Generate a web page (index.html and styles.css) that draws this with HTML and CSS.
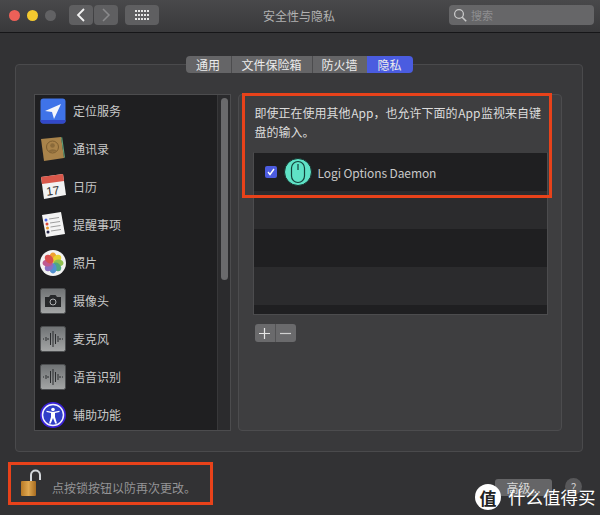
FILE: index.html
```html
<!DOCTYPE html>
<html lang="zh-CN">
<head>
    <meta charset="UTF-8">
    <title>安全性与隐私</title>
    <link rel="stylesheet" href="styles.css">
</head>
<body>
    <div class="window">
        <header class="titlebar">
            <div class="lights">
                <span class="dot dot-close"></span>
                <span class="dot dot-min"></span>
                <span class="dot dot-off"></span>
            </div>
            <div class="nav">
                <button class="tool-btn nav-btn">
                    <svg width="10" height="14" viewBox="0 0 10 14"><path d="M8 1 2 7l6 6" fill="none" stroke="#f2f2f2" stroke-width="1.8"/></svg>
                </button>
                <button class="tool-btn nav-btn">
                    <svg width="10" height="14" viewBox="0 0 10 14"><path d="m2 1 6 6-6 6" fill="none" stroke="#8a8a8c" stroke-width="1.5"/></svg>
                </button>
            </div>
            <button class="tool-btn grid-btn">
                <svg width="14" height="10" viewBox="0 0 14 10" fill="#e6e6e6">
                    <rect x="0" y="0" width="2" height="2"/><rect x="3" y="0" width="2" height="2"/><rect x="6" y="0" width="2" height="2"/><rect x="9" y="0" width="2" height="2"/><rect x="12" y="0" width="2" height="2"/>
                    <rect x="0" y="4" width="2" height="2"/><rect x="3" y="4" width="2" height="2"/><rect x="6" y="4" width="2" height="2"/><rect x="9" y="4" width="2" height="2"/><rect x="12" y="4" width="2" height="2"/>
                    <rect x="0" y="8" width="2" height="2"/><rect x="3" y="8" width="2" height="2"/><rect x="6" y="8" width="2" height="2"/><rect x="9" y="8" width="2" height="2"/><rect x="12" y="8" width="2" height="2"/>
                </svg>
            </button>
            <h1 class="title">安全性与隐私</h1>
            <div class="search">
                <svg width="14" height="14" viewBox="0 0 14 14"><circle cx="6" cy="6" r="4.4" fill="none" stroke="#c8c8c8" stroke-width="1.3"/><path d="m9.2 9.2 4 4" stroke="#c8c8c8" stroke-width="1.6"/></svg>
                <span>搜索</span>
            </div>
        </header>

        <main class="group">
            <nav class="tabs">
                <span class="tab tab-general">通用</span>
                <span class="tab tab-vault">文件保险箱</span>
                <span class="tab tab-firewall">防火墙</span>
                <span class="tab active">隐私</span>
            </nav>
            <div class="panels">
                <div class="list-box">
                    <ul class="services">
                        <li>
                            <svg class="icon" viewBox="0 0 26 26"><rect x="0.5" y="0.5" width="25" height="25" rx="3" fill="#3f73e8"/><path d="M0.5 22v1a2.500 2.500 0 0 0 2.500 2.500h20a2.500 2.500 0 0 0 2.500-2.500v-1z" fill="#3248c8"/><path d="M21 6 5 13l7 1 2 7z" fill="#f4f6fb"/></svg>
                            定位服务
                        </li>
                        <li>
                            <svg class="icon" viewBox="0 0 26 26"><path d="M1 3 21 1l3 21-20 3z" fill="#a9834a"/><path d="m21 1.500 1.200-.2 2.800 20-1 .7z" fill="#5f9e78"/><circle cx="12.500" cy="11" r="6" fill="none" stroke="#7c5d30"/><circle cx="12.500" cy="9.500" r="2.300" fill="#8a6a3a"/><path d="M8 16c1.500-3.500 7.500-3.500 9-.5z" fill="#8a6a3a"/></svg>
                            通讯录
                        </li>
                        <li>
                            <svg class="icon" viewBox="0 0 26 26"><path d="M1 3 23 0l3 21-22 4z" fill="#f2f2f2"/><path d="M1 3 23 0l1 7L2 10z" fill="#d9574a"/><text x="13" y="21" class="cal-day" transform="rotate(-7 13 18)">17</text></svg>
                            日历
                        </li>
                        <li>
                            <svg class="icon" viewBox="0 0 26 26"><path d="M2 3 21 0l4 22-19 3z" fill="#f4f4f4"/><circle cx="6" cy="8" r="1.500" fill="#4a64e0"/><circle cx="7" cy="12" r="1.500" fill="#d9483a"/><circle cx="7.500" cy="16" r="1.500" fill="#e8972a"/><circle cx="8" cy="20" r="1.500" fill="#26264a"/><path d="m9 7 10-1.500M10 11l10-1.500M10.500 15l10-1.500M11 19l10-1.500" stroke="#888" stroke-width=".8"/></svg>
                            提醒事项
                        </li>
                        <li>
                            <svg class="icon" viewBox="0 0 26 26">
                                <circle cx="13" cy="13" r="13" fill="#f2f2f2"/>
                                <ellipse cx="13" cy="7.500" rx="3.600" ry="5" fill="#f0a030"/>
                                <ellipse cx="13" cy="7.500" rx="3.600" ry="5" fill="#e8d030" transform="rotate(45 13 13)"/>
                                <ellipse cx="13" cy="7.500" rx="3.600" ry="5" fill="#90c050" transform="rotate(90 13 13)"/>
                                <ellipse cx="13" cy="7.500" rx="3.600" ry="5" fill="#50a880" transform="rotate(135 13 13)"/>
                                <ellipse cx="13" cy="7.500" rx="3.600" ry="5" fill="#5090d0" transform="rotate(180 13 13)"/>
                                <ellipse cx="13" cy="7.500" rx="3.600" ry="5" fill="#8a70c0" transform="rotate(225 13 13)"/>
                                <ellipse cx="13" cy="7.500" rx="3.600" ry="5" fill="#c05a90" transform="rotate(270 13 13)"/>
                                <ellipse cx="13" cy="7.500" rx="3.600" ry="5" fill="#d85050" transform="rotate(315 13 13)"/>
                            </svg>
                            照片
                        </li>
                        <li>
                            <svg class="icon" viewBox="0 0 26 26"><defs><linearGradient id="metal" x1="0" y1="0" x2="0" y2="1"><stop offset="0" stop-color="#6f7274"/><stop offset="1" stop-color="#a4a6a6"/></linearGradient></defs><rect x="0.500" y="0.500" width="25" height="25" rx="2" fill="url(#metal)" stroke="#4c4e50"/><path d="M5 9h4l1.500-2h5L17 9h4v10H5z" fill="#26282a"/><circle cx="13" cy="14" r="3" fill="none" stroke="#b0b2b4"/></svg>
                            摄像头
                        </li>
                        <li>
                            <svg class="icon" viewBox="0 0 26 26"><rect x="0.500" y="0.500" width="25" height="25" rx="2" fill="url(#metal)" stroke="#4c4e50"/><path d="M3 13h1M6 11v4M8 12v2M10.500 7v12M13 5v16M15.500 8v10M18 10v6M20 12v2M22 13h1" stroke="#2a2c2e" stroke-width="1"/></svg>
                            麦克风
                        </li>
                        <li>
                            <svg class="icon" viewBox="0 0 26 26"><rect x="0.500" y="0.500" width="25" height="25" rx="2" fill="url(#metal)" stroke="#4c4e50"/><path d="M3 13h1M6 11v4M8 12v2M10.500 7v12M13 5v16M15.500 8v10M18 10v6M20 12v2M22 13h1" stroke="#2a2c2e" stroke-width="1"/></svg>
                            语音识别
                        </li>
                        <li>
                            <svg class="icon" viewBox="0 0 26 26"><circle cx="13" cy="13" r="13" fill="#3a22d8"/><circle cx="13" cy="13" r="10.500" fill="#2f3ec8" stroke="#f2f2ff" stroke-width="1.500"/><circle cx="13" cy="7.500" r="1.800" fill="#fff"/><path d="M6.500 10 11 11v4l-2 6.500h1.800L13 16l2.200 5.500H17L15 15v-4l4.500-1v-1.200L13 10 6.500 8.800z" fill="#fff"/></svg>
                            辅助功能
                        </li>
                    </ul>
                    <div class="scrollbar"><span class="thumb"></span></div>
                </div>

                <section class="detail">
                    <p class="hint">即使正在使用其他 App，也允许下面的 App 监视来自键盘的输入。</p>
                    <div class="app-table">
                        <div class="app-row row-dark">
                            <span class="checkbox">
                                <svg width="8" height="8" viewBox="0 0 8 8"><path d="m1 4 2 2.500L7 1" fill="none" stroke="#fff" stroke-width="1.400"/></svg>
                            </span>
                            <svg class="app-icon" viewBox="0 0 28 28"><circle cx="14" cy="14" r="13.500" fill="#5fe2c6" stroke="#16302c"/><rect x="7.500" y="3.500" width="13" height="21" rx="6.500" fill="none" stroke="#14403a" stroke-width="1.200"/><path d="M14 6v6" stroke="#14403a" stroke-width="1.200"/></svg>
                            <span class="app-name">Logi Options Daemon</span>
                        </div>
                        <div class="app-row row-light"></div>
                        <div class="app-row row-dark"></div>
                        <div class="app-row row-light"></div>
                    </div>
                    <div class="add-remove">
                        <button class="add-btn">
                            <svg width="11" height="11" viewBox="0 0 11 11"><path d="M5.500 0v11M0 5.500h11" stroke="#e6e6e6" stroke-width="1.200"/></svg>
                        </button>
                        <button class="add-btn">
                            <svg width="11" height="11" viewBox="0 0 11 11"><path d="M0 5.500h11" stroke="#d0d0d0" stroke-width="1.200"/></svg>
                        </button>
                    </div>
                </section>
            </div>
        </main>

        <footer class="footer">
            <svg class="lock" width="22" height="28" viewBox="0 0 22 28">
                <defs><linearGradient id="brass" x1="0" y1="0" x2="1" y2="0"><stop offset="0" stop-color="#b87a26"/><stop offset=".5" stop-color="#e0a850"/><stop offset="1" stop-color="#a86c20"/></linearGradient></defs>
                <path d="M11 13V6c0-6 9-6 9 0v5" fill="none" stroke="#d4d8dc" stroke-width="2"/>
                <rect x="1" y="12" width="15" height="15" rx="1" fill="url(#brass)"/>
            </svg>
            <span class="lock-text">点按锁按钮以防再次更改。</span>
            <button class="advanced">高级...</button>
            <span class="help">?</span>
        </footer>
    </div>

    <!-- annotations on top of the screenshot -->
    <div class="mark mark-app"></div>
    <div class="mark mark-lock"></div>
    <div class="watermark">
        <span class="wm-logo">值</span>
        <span class="wm-text">什么值得买</span>
    </div>
</body>
</html>
```

FILE: styles.css
```css
* {
    box-sizing: border-box;
    margin: 0;
    padding: 0;
    font-family: "Noto Sans CJK SC", "Noto Sans", sans-serif;
}

body {
    width: 600px;
    height: 515px;
    overflow: hidden;
    position: relative;
    background-color: #323234;
}

button {
    border: none;
}

.window {
    height: 515px;
    display: flex;
    flex-direction: column;
}

/* title bar */
.titlebar {
    height: 33px;
    display: flex;
    align-items: center;
    padding: 0 6px 2px 9px;
    background: linear-gradient(#49494b, #39393b);
    border-bottom: 1px solid #161618;
    position: relative;
}

.lights {
    display: flex;
    gap: 7px;
    margin-right: 13px;
}

.dot {
    width: 11px;
    height: 11px;
    border-radius: 50%;
}

.dot-close { background-color: #ec6058; }
.dot-min { background-color: #f4c92f; }
.dot-off { background-color: #626264; }

.nav {
    display: flex;
    gap: 1px;
    margin-right: 7px;
}

.tool-btn {
    height: 20px;
    display: flex;
    align-items: center;
    justify-content: center;
    background-color: #5f5f61;
    border-radius: 4px;
}

.nav-btn { width: 24px; }
.grid-btn { width: 34px; }

.title {
    flex: 1;
    padding-right: 10px;
    text-align: center;
    font-size: 12px;
    font-weight: 400;
    color: #b2b2b2;
}

.search {
    width: 145px;
    height: 20px;
    display: flex;
    align-items: center;
    gap: 4px;
    padding-left: 4px;
    background-color: #666668;
    border-radius: 4px;
    font-size: 11px;
    color: #8e8e90;
}

/* tab group */
.group {
    width: 568px;
    height: 388px;
    margin: 31px 0 0 15px;
    padding: 0 20px 0 18px;
    background-color: #39393b;
    border: 1px solid #4a4a4c;
    border-radius: 4px;
}

.tabs {
    display: flex;
    justify-content: center;
    height: 17px;
    margin-top: -9px;
    padding-left: 2px;
}

.tab {
    display: flex;
    align-items: center;
    justify-content: center;
    height: 17px;
    background-color: #656567;
    border-left: 1px solid #4c4c4e;
    font-size: 12px;
    color: #ececec;
}

.tab-general {
    width: 45px;
    border-left: none;
    border-radius: 4px 0 0 4px;
}

.tab-vault { width: 81px; }
.tab-firewall { width: 55px; }

.tab.active {
    width: 46px;
    border-left: none;
    background-color: #4a5ce0;
    border-radius: 0 4px 4px 0;
}

.panels {
    display: flex;
    gap: 7px;
    margin-top: 21px;
}

/* left list */
.list-box {
    width: 197px;
    height: 337px;
    display: flex;
    background-color: #1f1f21;
    border: 1px solid #4c4c4e;
    overflow: hidden;
}

.services {
    flex: 1;
    list-style: none;
    margin-top: -3px;
}

.services li {
    height: 38px;
    display: flex;
    align-items: center;
    gap: 7px;
    padding-left: 5px;
    padding-bottom: 1px;
    font-size: 12px;
    color: #c8c8c8;
}

.icon {
    width: 26px;
    height: 26px;
    flex-shrink: 0;
}

.cal-day {
    font-size: 12px;
    text-anchor: middle;
    fill: #333;
    font-family: "Liberation Sans", sans-serif;
}

.scrollbar {
    width: 13px;
    padding: 3px 2px 0 3px;
    background-color: #2b2b2d;
    border-left: 1px solid #38383a;
}

.thumb {
    display: block;
    height: 182px;
    background-color: #6a6a6c;
    border-radius: 4px;
}

/* right panel */
.detail {
    width: 325px;
    height: 337px;
    padding: 8px 13px 0 14px;
    background-color: #3e3e40;
    border: 1px solid #4c4c4e;
    border-radius: 4px;
}

.hint {
    height: 49px;
    padding: 0 2px;
    font-size: 12px;
    line-height: 19px;
    word-spacing: -2px;
    color: #dcdcdc;
}

.app-table {
    height: 163px;
    background-color: #1f1f21;
    border: 1px solid #4c4c4e;
    border-top-color: #3e3e40;
    overflow: hidden;
}

.app-row {
    height: 38px;
    display: flex;
    align-items: center;
    padding-left: 11px;
}

.row-dark { background-color: #1f1f21; }
.row-light { background-color: #2b2b2d; }

.checkbox {
    width: 12px;
    height: 12px;
    display: flex;
    align-items: center;
    justify-content: center;
    background-color: #4c5ce0;
    border-radius: 2px;
    margin-right: 7px;
}

.app-icon {
    width: 28px;
    height: 28px;
    margin-right: 6px;
}

.app-name {
    font-size: 12px;
    letter-spacing: -0.1px;
    color: #c8c8c8;
}

.add-remove {
    display: flex;
    width: 41px;
    margin: 9px 0 0 2px;
    background-color: #6a6a6c;
    border-radius: 3px;
}

.add-btn {
    flex: 1;
    height: 18px;
    display: flex;
    align-items: center;
    justify-content: center;
    background: none;
}

.add-btn + .add-btn {
    border-left: 1px solid #535355;
}

/* footer */
.footer {
    display: flex;
    align-items: flex-end;
    height: 45px;
    padding-left: 20px;
}

.lock {
    flex-shrink: 0;
}

.lock-text {
    margin-left: 10px;
    font-size: 12px;
    line-height: 18px;
    color: #949496;
}

.advanced {
    width: 57px;
    height: 17px;
    margin: 0 13px 1px auto;
    background-color: #656567;
    border-radius: 3px;
    font-size: 12px;
    line-height: 17px;
    color: #d8d8d8;
}

.help {
    width: 17px;
    height: 17px;
    margin: 0 18px 2px 0;
    display: flex;
    align-items: center;
    justify-content: center;
    background-color: #58585a;
    border-radius: 50%;
    font-size: 12px;
    color: #c8c8c8;
}

/* overlays */
.mark {
    position: absolute;
    border: 3px solid #e8421a;
}

.mark-app {
    left: 242px;
    top: 93px;
    width: 310px;
    height: 105px;
}

.mark-lock {
    left: 8px;
    top: 462px;
    width: 205px;
    height: 43px;
}

.watermark {
    position: absolute;
    left: 475px;
    top: 484px;
    display: flex;
    align-items: center;
    gap: 7px;
}

.wm-logo {
    width: 26px;
    height: 26px;
    display: flex;
    align-items: center;
    justify-content: center;
    background-color: #fff;
    border-radius: 50%;
    font-size: 17px;
    font-weight: 700;
    color: #222;
}

.wm-text {
    font-size: 17.5px;
    line-height: 26px;
    color: #fff;
}
```
